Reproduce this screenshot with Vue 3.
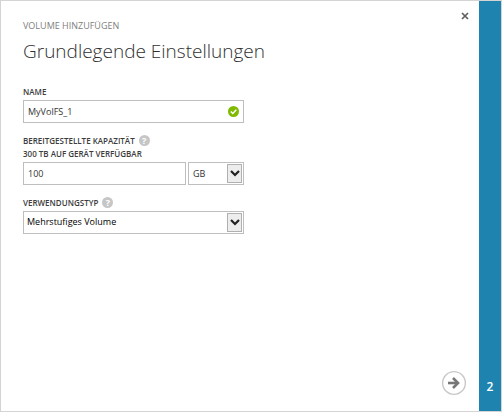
<script setup>
import { ref } from 'vue'

const name = ref('MyVolFS_1')
const capacity = ref('100')
const unit = ref('GB')
const usage = ref('Mehrstufiges Volume')
</script>

<template>
  <div class="dialog">
    <main class="content">
      <button class="close" type="button" aria-label="Schließen">
        <svg width="8" height="8" viewBox="0 0 8 8"><path d="M1 1L7 7M7 1L1 7" /></svg>
      </button>

      <header>
        <p class="eyebrow">VOLUME HINZUFÜGEN</p>
        <h1>Grundlegende Einstellungen</h1>
      </header>

      <form class="form" @submit.prevent>
        <div class="field">
          <div class="label-row">
            <label for="name">NAME</label>
          </div>
          <div class="box">
            <input id="name" v-model="name" type="text" />
            <svg class="valid" width="11" height="11" viewBox="0 0 11 11">
              <circle cx="5.5" cy="5.5" r="5.5" />
              <path d="M2.8 5.5L4.8 7.5L8.3 3.8" />
            </svg>
          </div>
        </div>

        <div class="field">
          <div class="label-row">
            <label for="capacity">BEREITGESTELLTE KAPAZITÄT</label>
            <button class="help" type="button" aria-label="Hilfe">?</button>
          </div>
          <p class="hint">300 TB AUF GERÄT VERFÜGBAR</p>
          <div class="pair">
            <div class="box grow">
              <input id="capacity" v-model="capacity" type="text" />
            </div>
            <div class="box unit">
              <select v-model="unit" aria-label="Einheit">
                <option>GB</option>
                <option>TB</option>
              </select>
              <span class="arrow">
                <svg width="10" height="7" viewBox="0 0 10 7"><path d="M1 1L5 5L9 1" /></svg>
              </span>
            </div>
          </div>
        </div>

        <div class="field">
          <div class="label-row">
            <label for="usage">VERWENDUNGSTYP</label>
            <button class="help" type="button" aria-label="Hilfe">?</button>
          </div>
          <div class="box usage">
            <select id="usage" v-model="usage">
              <option>Mehrstufiges Volume</option>
            </select>
            <span class="arrow">
              <svg width="10" height="7" viewBox="0 0 10 7"><path d="M1 1L5 5L9 1" /></svg>
            </span>
          </div>
        </div>
      </form>

      <button class="next" type="button" aria-label="Weiter">
        <svg width="26" height="26" viewBox="0 0 26 26">
          <circle cx="13" cy="13" r="11.4" />
          <path d="M7 13H17" />
          <path d="M12 8L17 13L12 18" />
        </svg>
      </button>
    </main>
    <aside class="steps">2</aside>
  </div>
</template>

<style>
body {
  margin: 0;
}
</style>

<style scoped>
* {
  box-sizing: border-box;
}

.dialog {
  display: flex;
  min-height: 100vh;
  border: 1px solid #d4d4d4;
  background: #fff;
  color: #444;
  font-family: "Open Sans", "Noto Sans", sans-serif;
}

.content {
  position: relative;
  flex: 1;
  display: flex;
  flex-direction: column;
  padding: 17px 12px 15px 22px;
}

button {
  padding: 0;
  border: 0;
  background: none;
  cursor: pointer;
}

.close {
  position: absolute;
  top: 11px;
  right: 10px;
  display: flex;
}

.close path {
  fill: none;
  stroke: #606060;
  stroke-width: 1.7;
}

.eyebrow {
  margin: 0;
  color: #808080;
  font-size: 9px;
  line-height: 16px;
}

h1 {
  margin: 3px 0 0;
  color: #303030;
  font-size: 19px;
  font-weight: 300;
  line-height: 28px;
}

.form {
  display: flex;
  flex-direction: column;
  gap: 11px;
  width: 46%;
  min-width: 221px;
  margin-top: 20px;
}

label,
.hint {
  margin: 0;
  color: #3c3c3c;
  font-size: 8px;
  font-weight: 600;
  line-height: 13px;
}

.label-row {
  display: flex;
  align-items: center;
  gap: 4px;
  height: 13px;
}

.label-row + .box,
.hint + .pair {
  margin-top: 2px;
}

.help {
  width: 11px;
  height: 11px;
  border-radius: 50%;
  background: #c6c6c6;
  color: #fff;
  font: 700 9px/11px "Open Sans", sans-serif;
  text-align: center;
}

.box {
  display: flex;
  align-items: center;
  height: 23px;
  border: 1px solid #bebebe;
  background: #fff;
}

.box input,
.box select {
  flex: 1;
  min-width: 0;
  height: 100%;
  padding: 0 4px;
  border: 0;
  outline: 0;
  appearance: none;
  background: none;
  color: #333;
  font: 9px "Open Sans", sans-serif;
}

.valid {
  flex: none;
  margin-right: 4px;
}

.valid circle {
  fill: #7fba00;
}

.valid path {
  fill: none;
  stroke: #fff;
  stroke-width: 1.5;
}

.pair {
  display: flex;
  gap: 2px;
}

.grow {
  flex: 1;
}

.unit,
.usage {
  position: relative;
}

.unit {
  width: 56px;
}

.box.usage select {
  padding: 0 3px 3px;
  color: #000;
}

.arrow {
  position: absolute;
  top: 1px;
  right: 1px;
  bottom: 1px;
  display: flex;
  align-items: center;
  justify-content: center;
  width: 15px;
  border: 1px solid #b0b0b0;
  background: #ededed;
  pointer-events: none;
}

.arrow path {
  fill: none;
  stroke: #222;
  stroke-width: 2.2;
}

.next {
  display: flex;
  align-self: flex-end;
  margin-top: auto;
}

.next circle {
  fill: #fff;
  stroke: #c8c8c8;
  stroke-width: 1.4;
}

.next path {
  fill: none;
  stroke: #777;
  stroke-width: 2.6;
}

.steps {
  display: flex;
  align-items: flex-end;
  justify-content: center;
  width: 22px;
  padding-bottom: 15px;
  background: #1f83b0;
  color: #fff;
  font-size: 12px;
  font-weight: 600;
  line-height: 18px;
}
</style>
